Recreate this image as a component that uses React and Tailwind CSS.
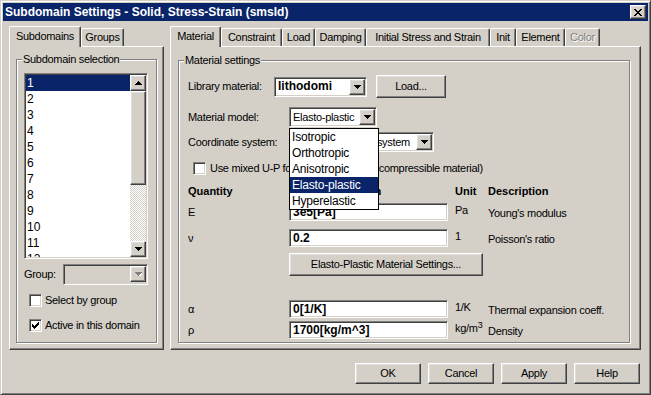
import React from "react";

const raised =
  "border border-t-white border-l-white border-r-[#404040] border-b-[#404040] shadow-[inset_-1px_-1px_0_#808080,inset_1px_1px_0_#dfdfdf] bg-[#d4d0c8]";
const sunken =
  "border border-t-[#808080] border-l-[#808080] border-r-white border-b-white shadow-[inset_1px_1px_0_#404040,inset_-1px_-1px_0_#d4d0c8]";

function Tri({ up, gray }) {
  return (
    <svg width="7" height="4" viewBox="0 0 7 4" shapeRendering="crispEdges" className={up ? "rotate-180" : ""}>
      {gray && <path d="M1 1h7v1H1zM2 2h5v1H2zM3 3h3v1H3zM4 4h1v1H4z" fill="#fff" />}
      <path d="M0 0h7v1H0zM1 1h5v1H1zM2 2h3v1H2zM3 3h1v1H3z" fill={gray ? "#808080" : "#000"} />
    </svg>
  );
}

function ArrowBtn({ up, gray }) {
  return (
    <div className={`${raised} w-[16px] h-[16px] shrink-0 flex items-center justify-center`}>
      <Tri up={up} gray={gray} />
    </div>
  );
}

function Combo({ w, h = "h-[20px]", text, bold, disabled, children }) {
  return (
    <div className={`${sunken} ${w} ${h} relative p-[1px] flex ${disabled ? "bg-[#d4d0c8]" : "bg-white"}`}>
      <div className={`flex-1 pl-[2px] flex items-center overflow-hidden whitespace-nowrap ${bold ? "font-bold text-[12px] tracking-normal" : ""}`}>
        {text}
      </div>
      <ArrowBtn gray={disabled} />
      {children}
    </div>
  );
}

function Check({ checked }) {
  return (
    <div className={`${sunken} w-[13px] h-[13px] bg-white shrink-0 flex items-center justify-center`}>
      {checked && (
        <svg width="7" height="7" viewBox="0 0 7 7" shapeRendering="crispEdges">
          <path d="M6 0h1v3H6zM5 1h1v3H5zM4 2h1v3H4zM3 3h1v3H3zM2 4h1v3H2zM1 3h1v3H1zM0 2h1v3H0z" fill="#000" />
        </svg>
      )}
    </div>
  );
}

function Button({ w, h = "h-[21px]", children }) {
  return <div className={`${raised} ${w} ${h} flex items-center justify-center whitespace-nowrap`}>{children}</div>;
}

function Tab({ label, w, active, disabled }) {
  return (
    <div
      className={`${w} ${
        active ? "h-[21px] -mb-px relative z-10 pb-[2px]" : "h-[18px]"
      } bg-[#d4d0c8] border-t border-l border-t-white border-l-white border-r border-r-[#404040] shadow-[inset_-1px_0_0_#808080] rounded-t-[2px] flex items-center justify-center whitespace-nowrap ${
        disabled ? "text-[#808080] [text-shadow:1px_1px_0_#fff]" : ""
      }`}
    >
      {label}
    </div>
  );
}

const panel =
  "border border-t-white border-l-white border-r-[#404040] border-b-[#404040] shadow-[inset_-1px_-1px_0_#808080]";
const group = "border border-[#808080] shadow-[1px_1px_0_#fff,inset_1px_1px_0_#fff] p-0 m-0";

function Field({ value }) {
  return (
    <div className={`${sunken} w-[159px] h-[18px] bg-white pl-[3px] flex items-center font-bold text-[12px] tracking-normal whitespace-nowrap`}>
      {value}
    </div>
  );
}

function Row({ q, value, unit, desc, mt }) {
  return (
    <div className={`grid grid-cols-[101px_166px_33px_1fr] pl-[9px] h-[18px] ${mt}`}>
      <div className="self-center">{q}</div>
      <Field value={value} />
      <div className="pt-[1px]">{unit}</div>
      <div className="self-center pt-[2px]">{desc}</div>
    </div>
  );
}

export default function App() {
  const items = ["1", "2", "3", "4", "5", "6", "7", "8", "9", "10", "11", "12"];
  const models = ["Isotropic", "Orthotropic", "Anisotropic", "Elasto-plastic", "Hyperelastic"];

  return (
    <div className="w-[651px] h-[395px] overflow-hidden bg-[#d4d0c8] border border-t-[#d4d0c8] border-l-[#d4d0c8] border-r-[#404040] border-b-[#404040] shadow-[inset_1px_1px_0_#fff,inset_-1px_-1px_0_#808080] p-[2px] font-['Liberation_Sans',Arial,sans-serif] text-[11px] leading-[13px] tracking-[-0.3px] text-black flex flex-col">
      {/* title bar */}
      <div className="h-[18px] bg-[#0a246a] flex items-center pl-[2px] pr-[2px]">
        <div className="flex-1 text-white font-bold text-[12px] tracking-normal whitespace-nowrap">
          Subdomain Settings - Solid, Stress-Strain (smsld)
        </div>
        <div className={`${raised} w-[16px] h-[14px] flex items-center justify-center`}>
          <svg width="8" height="7" viewBox="0 0 8 7" shapeRendering="crispEdges">
            <path d="M0 0h2v1H0zM6 0h2v1H6zM1 1h2v1H1zM5 1h2v1H5zM2 2h4v1H2zM3 3h2v1H3zM2 4h4v1H2zM1 5h2v1H1zM5 5h2v1H5zM0 6h2v1H0zM6 6h2v1H6z" fill="#000" />
          </svg>
        </div>
      </div>

      <div className="flex mt-[5px] pl-[6px]">
        {/* left column */}
        <div className="w-[155px] flex flex-col">
          <div className="flex items-end h-[20px]">
            <Tab label="Subdomains" w="w-[72px]" active />
            <Tab label="Groups" w="w-[43px]" />
          </div>
          <div className={`${panel} h-[304px] pt-[6px] pl-[6px]`}>
            <fieldset className={`${group} w-[141px] h-[290px]`}>
              <legend className="ml-[5px] px-[1px] bg-[#d4d0c8]">Subdomain selection</legend>
              <div className={`${sunken} ml-[7px] mt-[7px] w-[124px] h-[186px] bg-white p-[1px] flex`}>
                <div className="flex-1 overflow-hidden">
                  {items.map((it, i) => (
                    <div
                      key={it}
                      className={`h-[16px] leading-[16px] pl-[1px] text-[12px] tracking-normal ${
                        i === 0 ? "bg-[#0a246a] text-white" : ""
                      }`}
                    >
                      {it}
                    </div>
                  ))}
                </div>
                <div className="w-[16px] flex flex-col">
                  <ArrowBtn up />
                  <div className={`${raised} h-[94px]`} />
                  <div className="flex-1 bg-[repeating-conic-gradient(#d4d0c8_0%_25%,#ffffff_0%_50%)] bg-[length:2px_2px]" />
                  <ArrowBtn />
                </div>
              </div>
              <div className="flex items-center ml-[7px] mt-[5px]">
                <div className="w-[39px]">Group:</div>
                <Combo w="w-[85px]" h="h-[21px]" disabled />
              </div>
              <div className="flex items-center ml-[12px] mt-[9px]">
                <Check />
                <div className="ml-[3px]">Select by group</div>
              </div>
              <div className="flex items-center ml-[12px] mt-[12px]">
                <Check checked />
                <div className="ml-[3px]">Active in this domain</div>
              </div>
            </fieldset>
          </div>
        </div>

        {/* right column */}
        <div className="w-[471px] ml-[6px] flex flex-col">
          <div className="flex items-end h-[20px]">
            <Tab label="Material" w="w-[51px]" active />
            <Tab label="Constraint" w="w-[61px]" />
            <Tab label="Load" w="w-[33px]" />
            <Tab label="Damping" w="w-[51px]" />
            <Tab label="Initial Stress and Strain" w="w-[124px]" />
            <Tab label="Init" w="w-[26px]" />
            <Tab label="Element" w="w-[49px]" />
            <Tab label="Color" w="w-[35px]" disabled />
          </div>
          <div className={`${panel} h-[304px] pt-[7px] pl-[7px]`}>
            <fieldset className={`${group} w-[452px] h-[289px]`}>
              <legend className="ml-[5px] px-[1px] bg-[#d4d0c8]">Material settings</legend>

              <div className="flex items-center h-[23px] mt-[8px] pl-[9px]">
                <div className="w-[86px]">Library material:</div>
                <Combo w="w-[93px]" text="lithodomi" bold />
                <div className="ml-[9px]">
                  <Button w="w-[70px]" h="h-[23px]">Load...</Button>
                </div>
              </div>

              <div className="flex items-center h-[20px] mt-[9px] pl-[9px]">
                <div className="w-[101px]">Material model:</div>
                <div className="relative z-20">
                  <Combo w="w-[88px]" text="Elasto-plastic" />
                  <div className="absolute left-0 top-[21px] w-[90px] border border-black bg-white">
                    {models.map((m) => (
                      <div
                        key={m}
                        className={`h-[16px] leading-[16px] pl-[2px] whitespace-nowrap text-[12px] tracking-[-0.2px] ${
                          m === "Elasto-plastic" ? "bg-[#0a246a] text-white" : ""
                        }`}
                      >
                        {m}
                      </div>
                    ))}
                  </div>
                </div>
              </div>

              <div className="flex items-center h-[20px] mt-[5px] pl-[9px]">
                <div className="w-[101px]">Coordinate system:</div>
                <Combo w="w-[145px]" text="Global coordinate system" />
              </div>

              <div className="flex items-center h-[13px] mt-[10px] pl-[14px]">
                <Check />
                <div className="ml-[4px] whitespace-nowrap">
                  Use mixed U-P formulation (nearly incompressible material)
                </div>
              </div>

              <div className="grid grid-cols-[101px_166px_33px_1fr] pl-[9px] mt-[9px] h-[14px] font-bold tracking-normal items-center">
                <div>Quantity</div>
                <div className="pl-[1px]">Value/Expression</div>
                <div>Unit</div>
                <div>Description</div>
              </div>

              <Row q="E" value="3e5[Pa]" unit="Pa" desc="Young's modulus" mt="mt-[5px]" />
              <Row q="ν" value="0.2" unit="1" desc="Poisson's ratio" mt="mt-[8px]" />

              <div className="pl-[110px] mt-[6px]">
                <Button w="w-[194px]" h="h-[23px]">Elasto-Plastic Material Settings...</Button>
              </div>

              <Row q="α" value="0[1/K]" unit="1/K" desc="Thermal expansion coeff." mt="mt-[24px]" />
              <Row
                q="ρ"
                value="1700[kg/m^3]"
                unit={
                  <span className="whitespace-nowrap">
                    kg/m<sup className="text-[9px]">3</sup>
                  </span>
                }
                desc="Density"
                mt="mt-[3px]"
              />
            </fieldset>
          </div>
        </div>
      </div>

      <div className="flex justify-end gap-[7px] mt-[13px] pr-[8px]">
        <Button w="w-[66px]">OK</Button>
        <Button w="w-[66px]">Cancel</Button>
        <Button w="w-[66px]">Apply</Button>
        <Button w="w-[66px]">Help</Button>
      </div>
    </div>
  );
}
